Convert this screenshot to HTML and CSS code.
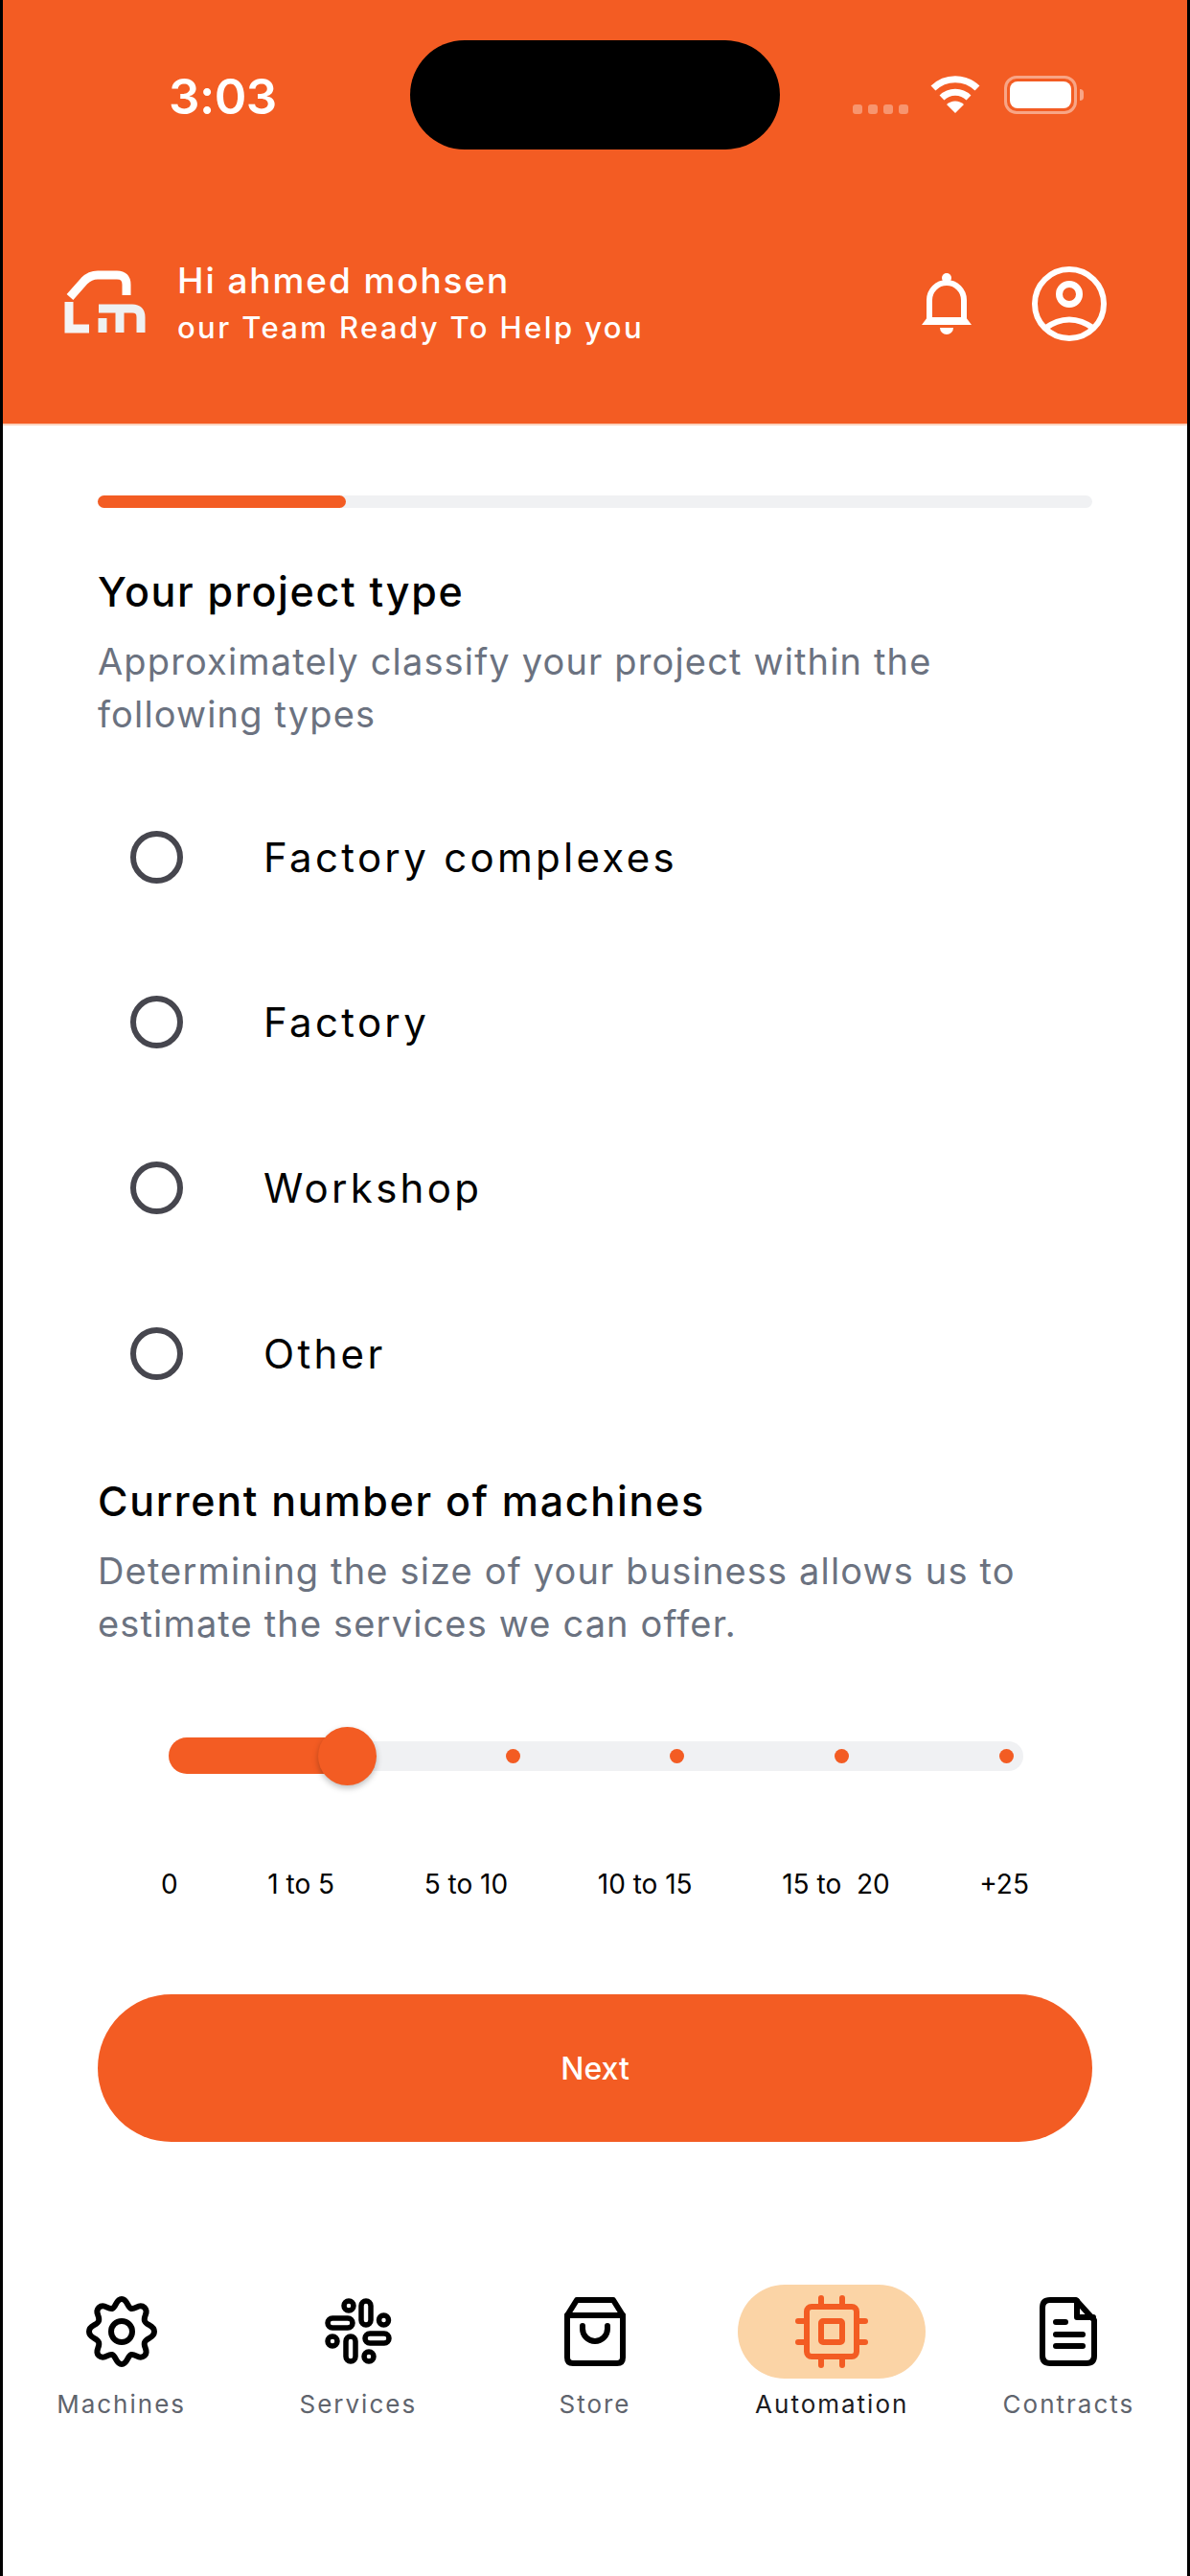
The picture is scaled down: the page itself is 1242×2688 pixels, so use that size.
FILE: index.html

```html
<!DOCTYPE html>
<html lang="en">
<head>
    <meta charset="UTF-8">
    <meta name="viewport" content="width=device-width, initial-scale=1.0">
    <title>Your project type</title>
    <link rel="stylesheet" href="styles.css">
</head>
<body>
    <div class="screen">
        <header class="top">
            <div class="status">
                <span class="time">3:03</span>
                <div class="island"></div>
                <div class="status-icons">
                    <div class="signal"><i></i><i></i><i></i><i></i></div>
                    <svg class="wifi" width="54" height="40" viewBox="0 0 54 40">
                        <path d="M4 13 A33 33 0 0 1 50 13" fill="none" stroke="#fff" stroke-width="7"/>
                        <path d="M13 23 A20 20 0 0 1 41 23" fill="none" stroke="#fff" stroke-width="7"/>
                        <path d="M18 30 A13 13 0 0 1 36 30 L27 39 Z" fill="#fff"/>
                    </svg>
                    <div class="battery"><div class="battery-level"></div></div>
                    <div class="battery-tip"></div>
                </div>
            </div>
            <div class="greeting">
                <svg class="logo" width="88" height="74" viewBox="0 0 88 74">
                    <path d="M7 30 L22 13 Q28 7 36 7 H56 Q66 7 66 17 V28" fill="none" stroke="#fff" stroke-width="9"/>
                    <path d="M6 35 V63 H27" fill="none" stroke="#f4f4f4" stroke-width="9"/>
                    <path d="M37 42 H72 Q81 42 81 51 V67 M59 44 V67 M41 52 V67" fill="none" stroke="#eef0f1" stroke-width="9"/>
                </svg>
                <div class="greeting-text">
                    <div class="hello">Hi ahmed mohsen</div>
                    <div class="hello-sub">our Team Ready To Help you</div>
                </div>
                <div class="top-actions">
                    <svg width="56" height="66" viewBox="0 0 56 66">
                        <circle cx="28" cy="6" r="5" fill="#fff"/>
                        <path d="M10 50 V29 A18 18 0 0 1 46 29 V50" fill="none" stroke="#fff" stroke-width="6"/>
                        <path d="M2 55 L8 47 H48 L54 55 Z" fill="#fff"/>
                        <path d="M21 58 H35 A7 7 0 0 1 21 58 Z" fill="#fff"/>
                    </svg>
                    <svg width="80" height="80" viewBox="0 0 80 80">
                        <circle cx="40" cy="40" r="36" fill="none" stroke="#fff" stroke-width="6"/>
                        <circle cx="40" cy="30" r="10.5" fill="none" stroke="#fff" stroke-width="7"/>
                        <path d="M14 66 Q40 47 66 66" fill="none" stroke="#fff" stroke-width="6"/>
                    </svg>
                </div>
            </div>
        </header>

        <main class="content">
            <div class="progress"><div class="progress-fill"></div></div>

            <h2 class="title">Your project type</h2>
            <p class="desc">Approximately classify your project within the following types</p>

            <div class="options">
                <div class="option"><span class="radio"></span><span>Factory complexes</span></div>
                <div class="option"><span class="radio"></span><span>Factory</span></div>
                <div class="option"><span class="radio"></span><span>Workshop</span></div>
                <div class="option"><span class="radio"></span><span>Other</span></div>
            </div>

            <h2 class="title title-machines">Current number of machines</h2>
            <p class="desc">Determining the size of your business allows us to estimate the services we can offer.</p>

            <div class="slider">
                <div class="slider-fill"></div>
                <div class="slider-thumb"></div>
                <div class="slider-dots"><i></i><i></i><i></i><i></i></div>
            </div>
            <div class="slider-labels">
                <span>0</span>
                <span>1 to 5</span>
                <span>5 to 10</span>
                <span>10 to 15</span>
                <span>15 to&nbsp; 20</span>
                <span>+25</span>
            </div>

            <button class="next">Next</button>
        </main>

        <nav class="tabs">
            <div class="tab">
                <div class="tab-icon">
                    <svg width="76" height="76" viewBox="0 0 76 76" fill="none" stroke="#000" stroke-width="6" stroke-linejoin="round">
                        <circle cx="38" cy="38" r="11"/>
                        <path d="M38 4 C44 4 44 13 48 14 C53 15 56 8 62 13 C67 18 60 22 62 27 C64 32 72 31 72 38 C72 45 64 44 62 49 C60 54 67 58 62 63 C56 68 53 61 48 62 C44 63 44 72 38 72 C32 72 32 63 28 62 C23 61 20 68 14 63 C9 58 16 54 14 49 C12 44 4 45 4 38 C4 31 12 32 14 27 C16 22 9 18 14 13 C20 8 23 15 28 14 C32 13 32 4 38 4 Z"/>
                    </svg>
                </div>
                <span>Machines</span>
            </div>
            <div class="tab">
                <div class="tab-icon">
                    <svg width="70" height="70" viewBox="0 0 70 70" fill="none" stroke="#000" stroke-width="5.5">
                        <rect x="38" y="3" width="10" height="25" rx="5"/>
                        <rect x="22" y="40" width="10" height="26" rx="5"/>
                        <rect x="3" y="21" width="26" height="10" rx="5"/>
                        <rect x="42" y="37" width="25" height="10" rx="5"/>
                        <circle cx="25" cy="8" r="5"/>
                        <circle cx="61.5" cy="23" r="5"/>
                        <circle cx="8" cy="45" r="5"/>
                        <circle cx="46" cy="61" r="5"/>
                    </svg>
                </div>
                <span>Services</span>
            </div>
            <div class="tab">
                <div class="tab-icon">
                    <svg width="66" height="72" viewBox="0 0 66 72" fill="none" stroke="#000" stroke-width="6" stroke-linejoin="round" stroke-linecap="round">
                        <path d="M4 19 L14 3 H52 L62 19 V63 Q62 69 56 69 H10 Q4 69 4 63 Z"/>
                        <path d="M4 19 H62"/>
                        <path d="M20 30 V33 A13 13 0 0 0 46 33 V30"/>
                    </svg>
                </div>
                <span>Store</span>
            </div>
            <div class="tab tab-active">
                <div class="tab-icon tab-pill">
                    <svg width="76" height="76" viewBox="0 0 76 76" fill="none" stroke="#f35c23" stroke-width="6" stroke-linecap="round" stroke-linejoin="round">
                        <rect x="12" y="12" width="52" height="52" rx="5"/>
                        <rect x="27" y="27" width="22" height="22" rx="2"/>
                        <path d="M27 3 V12 M49 3 V12 M27 64 V73 M49 64 V73 M3 27 H12 M3 49 H12 M64 27 H73 M64 49 H73"/>
                    </svg>
                </div>
                <span>Automation</span>
            </div>
            <div class="tab">
                <div class="tab-icon">
                    <svg width="60" height="72" viewBox="0 0 60 72" fill="none" stroke="#000" stroke-width="6" stroke-linecap="round" stroke-linejoin="round">
                        <path d="M38 3 H11 Q3 3 3 11 V61 Q3 69 11 69 H49 Q57 69 57 61 V24 Z"/>
                        <path d="M39 4 V21 H56"/>
                        <path d="M17 26 H27 M17 39 H45 M17 51 H45"/>
                    </svg>
                </div>
                <span>Contracts</span>
            </div>
        </nav>
    </div>
</body>
</html>
```

FILE: styles.css

```css
* {
    box-sizing: border-box;
}

html, body {
    margin: 0;
    padding: 0;
}

body {
    font-family: "Inter", "Liberation Sans", sans-serif;
    background-color: #fff;
}

.screen {
    width: 1242px;
    height: 2688px;
    border-left: 3px solid #000;
    border-right: 3px solid #000;
    overflow: hidden;
}

.top {
    background-color: #f35c23;
    height: 444px;
    border-bottom: 2px solid #fcd3bd;
    color: #fff;
}

.status {
    display: flex;
    align-items: center;
    height: 156px;
    padding-top: 42px;
}

.time {
    width: 425px;
    padding-left: 173px;
    margin-top: 3px;
    font-size: 51px;
    font-weight: 600;
    letter-spacing: -0.5px;
}

.island {
    flex: none;
    width: 386px;
    height: 114px;
    border-radius: 57px;
    background-color: #000;
}

.status-icons {
    display: flex;
    align-items: center;
    padding-left: 76px;
    height: 60px;
}

.signal {
    display: flex;
    gap: 6px;
    margin-top: 30px;
    margin-right: 22px;
}

.signal i {
    width: 10px;
    height: 10px;
    border-radius: 3px;
    background-color: rgba(255, 255, 255, 0.35);
}

.wifi {
    margin-right: 24px;
}

.battery {
    width: 76px;
    height: 40px;
    border: 3px solid rgba(255, 255, 255, 0.45);
    border-radius: 13px;
    padding: 3px;
}

.battery-level {
    height: 100%;
    border-radius: 8px;
    background-color: #fff;
}

.battery-tip {
    width: 4px;
    height: 12px;
    margin-left: 3px;
    border-radius: 0 4px 4px 0;
    background-color: rgba(255, 255, 255, 0.45);
}

.greeting {
    display: flex;
    align-items: center;
    padding: 112px 83px 0 63px;
}

.greeting-text {
    margin-left: 31px;
}

.hello {
    font-size: 37px;
    line-height: 50px;
    letter-spacing: 1.9px;
    font-weight: 500;
}

.hello-sub {
    font-size: 31px;
    line-height: 48px;
    letter-spacing: 2.4px;
    font-weight: 500;
}

.top-actions {
    display: flex;
    align-items: center;
    gap: 60px;
    margin-left: auto;
}

.content {
    padding: 73px 99px 0 99px;
}

.progress {
    height: 13px;
    border-radius: 7px;
    background-color: #f0f1f3;
}

.progress-fill {
    width: 259px;
    height: 100%;
    border-radius: 7px;
    background-color: #f35c23;
}

.title {
    margin: 59px 0 0 0;
    font-size: 43px;
    line-height: 56px;
    letter-spacing: 1.7px;
    font-weight: 500;
    color: #000;
}

.title-machines {
    margin-top: 0;
}

.desc {
    margin: 18px 0 0 0;
    font-size: 38px;
    line-height: 55px;
    letter-spacing: 1.15px;
    color: #6b7280;
}

.options {
    margin-top: 35px;
    margin-bottom: 40px;
}

.option {
    display: flex;
    align-items: center;
    height: 172.6px;
    padding-left: 34px;
    font-size: 42px;
    letter-spacing: 3.3px;
    color: #000;
}

.radio {
    width: 55px;
    height: 55px;
    margin-right: 84px;
    border: 6px solid #46464e;
    border-radius: 50%;
}

.slider {
    position: relative;
    height: 31px;
    margin: 95px 72px 0 74px;
    border-radius: 16px;
    background-color: #f0f1f3;
}

.slider-fill {
    position: absolute;
    left: 0;
    top: -4px;
    width: 186px;
    height: 38px;
    border-radius: 19px;
    background-color: #f35c23;
}

.slider-thumb {
    position: absolute;
    left: 156px;
    top: -15px;
    width: 61px;
    height: 61px;
    border-radius: 50%;
    background-color: #f35c23;
    box-shadow: 0 3px 6px rgba(0, 0, 0, 0.25);
}

.slider-dots i {
    position: absolute;
    top: 8px;
    width: 15px;
    height: 15px;
    border-radius: 50%;
    background-color: #f35c23;
}

.slider-dots i:nth-child(1) { left: 352px; }
.slider-dots i:nth-child(2) { left: 523px; }
.slider-dots i:nth-child(3) { left: 695px; }
.slider-dots i:nth-child(4) { left: 867px; }

.slider-labels {
    display: flex;
    justify-content: space-between;
    margin: 100px 66px 0 66px;
    font-size: 28px;
    line-height: 36px;
    color: #000;
}

.next {
    display: block;
    width: 100%;
    height: 154px;
    margin-top: 97px;
    border: none;
    border-radius: 77px;
    background-color: #f35c23;
    color: #fff;
    font-family: inherit;
    font-size: 32px;
    font-weight: 500;
}

.tabs {
    display: flex;
    margin-top: 149px;
}

.tab {
    flex: 1;
    display: flex;
    flex-direction: column;
    align-items: center;
    font-size: 26px;
    letter-spacing: 2px;
    color: #5f646d;
}

.tab-icon {
    display: flex;
    align-items: center;
    justify-content: center;
    width: 196px;
    height: 98px;
    margin-bottom: 11px;
}

.tab-pill {
    border-radius: 49px;
    background-color: #fbd4a6;
}

.tab-active {
    color: #1c1c1f;
}
```
